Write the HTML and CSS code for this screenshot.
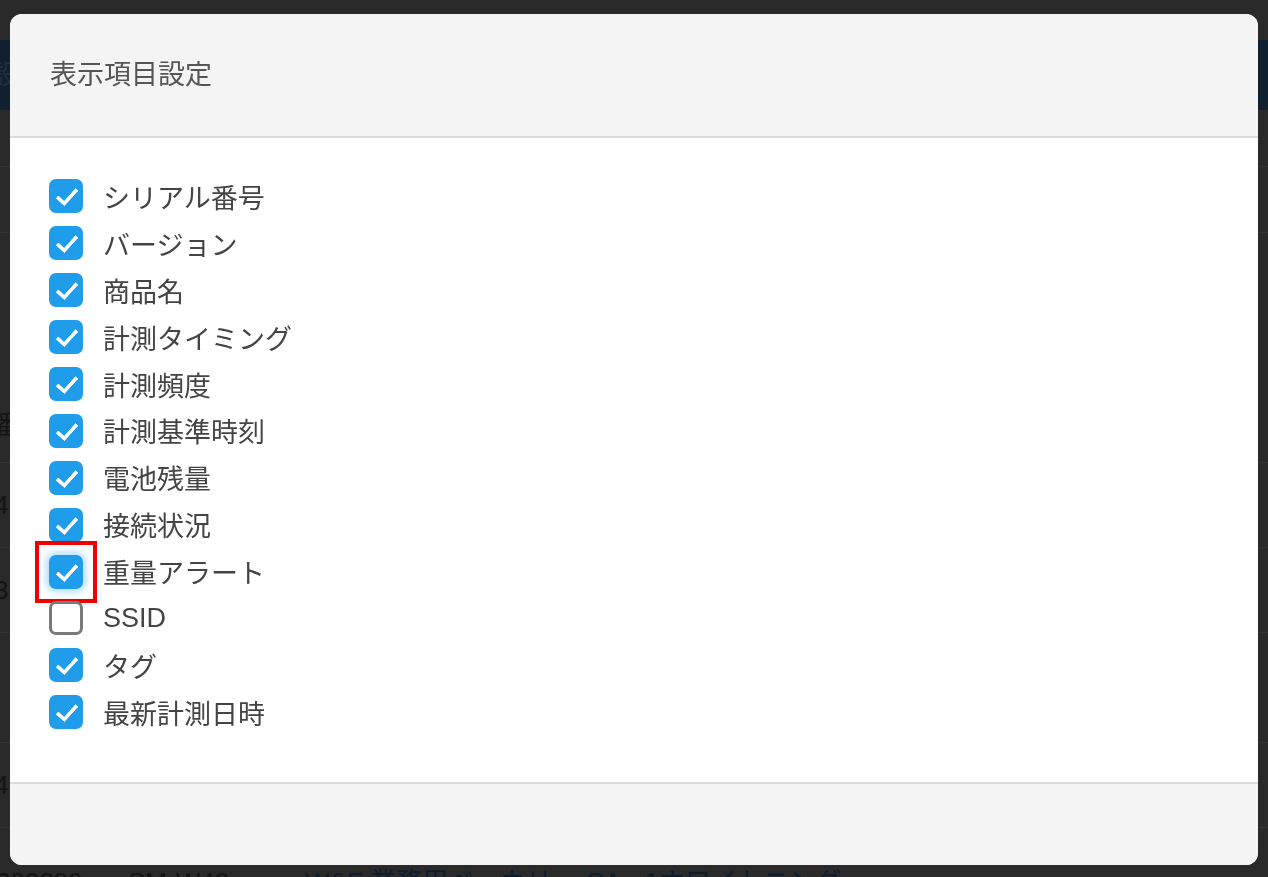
FILE: index.html
```html
<!DOCTYPE html>
<html lang="ja">
<head>
    <meta charset="UTF-8">
    <meta name="viewport" content="width=device-width, initial-scale=1.0">
    <title>表示項目設定</title>
    <link rel="stylesheet" href="styles.css">
</head>
<body>
    <!-- 後ろの一覧画面（モーダルで暗くなっている） -->
    <div class="pagina">
        <div class="cabecera-pagina">設</div>
        <div class="fila alto-57"></div>
        <div class="fila alto-66"></div>
        <div class="fila alto-230 texto-abajo">番</div>
        <div class="fila">4</div>
        <div class="fila">3</div>
        <div class="fila alto-110"></div>
        <div class="fila">4</div>
        <div class="fila-ultima">
            <span class="celda-serie">303399</span>
            <span class="celda-modelo">SM-W42</span>
            <span class="celda-nombre">W&amp;F 業務用ベーカリー CA-a1ホワイトニング</span>
        </div>
    </div>

    <section class="modal">
        <header class="modal-cabecera">
            <h2 class="modal-titulo">表示項目設定</h2>
        </header>

        <div class="modal-cuerpo">
            <label class="opcion"><span class="casilla marcada"></span>シリアル番号</label>
            <label class="opcion"><span class="casilla marcada"></span>バージョン</label>
            <label class="opcion"><span class="casilla marcada"></span>商品名</label>
            <label class="opcion"><span class="casilla marcada"></span>計測タイミング</label>
            <label class="opcion"><span class="casilla marcada"></span>計測頻度</label>
            <label class="opcion"><span class="casilla marcada"></span>計測基準時刻</label>
            <label class="opcion"><span class="casilla marcada"></span>電池残量</label>
            <label class="opcion"><span class="casilla marcada"></span>接続状況</label>
            <label class="opcion"><span class="casilla marcada enfocada"><span class="resaltado"></span></span>重量アラート</label>
            <label class="opcion"><span class="casilla"></span>SSID</label>
            <label class="opcion"><span class="casilla marcada"></span>タグ</label>
            <label class="opcion"><span class="casilla marcada"></span>最新計測日時</label>
        </div>

        <footer class="modal-pie"></footer>
    </section>
</body>
</html>
```

FILE: styles.css
```css
body {
    margin: 0;
    background-color: #2a2a2a;
    font-family: "Liberation Sans", "Noto Sans CJK JP", sans-serif;
    overflow: hidden;
    height: 877px;
}

/* fondo */
.pagina {
    padding-top: 40px;
    color: #141414;
    font-size: 26px;
}

.cabecera-pagina {
    height: 70px;
    background-color: #10202e;
    color: #22303c;
    line-height: 70px;
    text-indent: -8px;
}

.fila {
    height: 84px;
    border-bottom: 1px solid #333;
    line-height: 84px;
    text-indent: -6px;
}

.alto-57 {
    height: 56px;
}

.alto-66 {
    height: 65px;
}

.alto-230 {
    height: 229px;
}

.alto-110 {
    height: 109px;
}

.texto-abajo {
    line-height: 384px;
}

.fila-ultima {
    display: flex;
    line-height: 26px;
    padding-top: 41px;
}

.celda-serie {
    margin-left: -4px;
    width: 132px;
}

.celda-modelo {
    width: 177px;
}

.celda-nombre {
    color: #0d1d30;
    white-space: nowrap;
}

/* modal */
.modal {
    position: fixed;
    top: 14px;
    left: 10px;
    width: 1248px;
    height: 851px;
    display: flex;
    flex-direction: column;
    background-color: #fff;
    border-radius: 12px;
    overflow: hidden;
}

.modal-cabecera {
    height: 122px;
    background-color: #f4f4f4;
    border-bottom: 2px solid #dcdcdc;
    display: flex;
    align-items: center;
    padding-left: 40px;
    flex-shrink: 0;
}

.modal-titulo {
    margin: 0 0 6px 0;
    font-family: "Noto Sans CJK JP", sans-serif;
    font-weight: normal;
    font-size: 27px;
    color: #555;
}

.modal-cuerpo {
    flex: 1;
    padding: 35px 0 0 39px;
    display: flex;
    flex-direction: column;
}

.modal-pie {
    height: 81px;
    background-color: #f4f4f4;
    border-top: 2px solid #dcdcdc;
    flex-shrink: 0;
}

.opcion {
    display: flex;
    align-items: center;
    height: 46.9px;
    gap: 20px;
    font-family: "Liberation Sans", "Noto Sans CJK JP", sans-serif;
    font-size: 27px;
    color: #444;
}

.casilla {
    position: relative;
    width: 34px;
    height: 34px;
    box-sizing: border-box;
    border: 3px solid #7a7a7a;
    border-radius: 7px;
    background-color: #fff;
    flex-shrink: 0;
}

.casilla.marcada {
    border: none;
    background-color: #1f9cea;
}

.casilla.marcada::after {
    content: "";
    position: absolute;
    left: 12px;
    top: 5px;
    width: 8px;
    height: 17px;
    border-right: 4px solid #fff;
    border-bottom: 4px solid #fff;
    transform: rotate(42deg);
    border-radius: 1px;
}

.casilla.enfocada {
    box-shadow: 0 0 7px 3px rgba(31, 156, 234, 0.35);
}

.resaltado {
    position: absolute;
    left: -14px;
    top: -14px;
    width: 62px;
    height: 62px;
    box-sizing: border-box;
    border: 4px solid #f00000;
}
```
